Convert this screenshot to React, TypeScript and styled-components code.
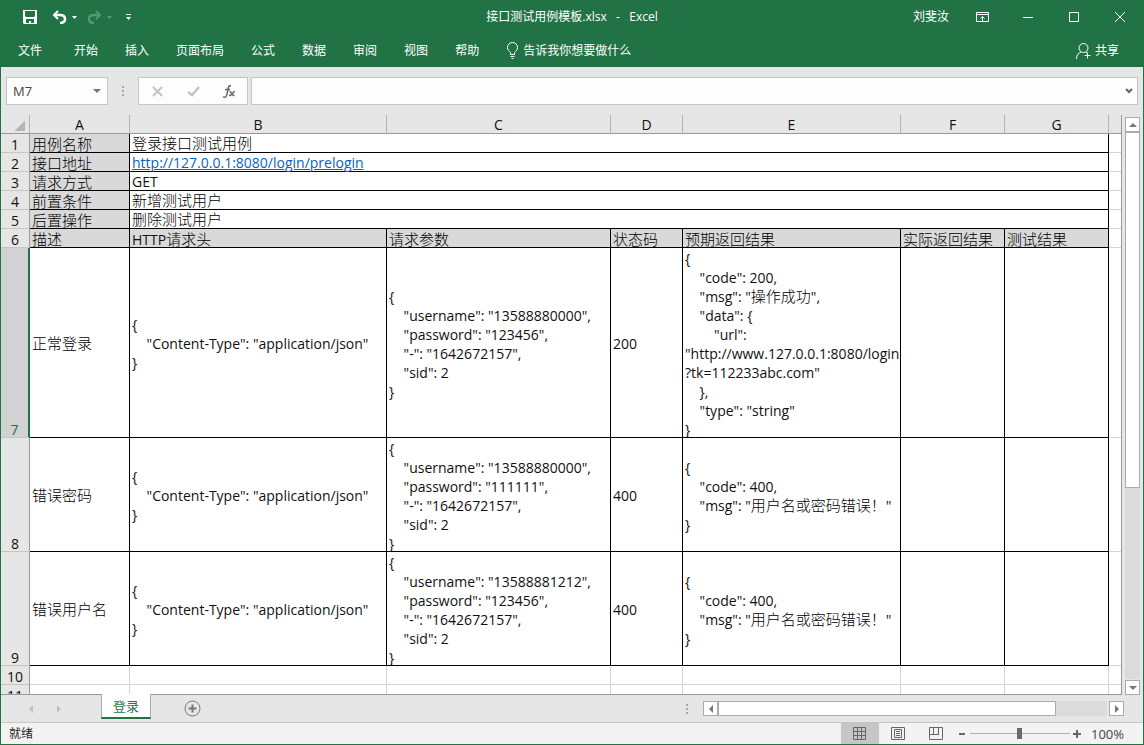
import React from "react";
import styled, { createGlobalStyle } from "styled-components";

const GlobalStyle = createGlobalStyle`
  * { box-sizing: border-box; }
  body { margin: 0; }
  button, input { font: inherit; color: inherit; }
  button { border: 0; padding: 0; background: none; cursor: pointer; }
  svg { display: block; flex: none; }
`;

const GREEN = "#217346";

const Window = styled.div`
  display: flex;
  flex-direction: column;
  height: 100vh;
  border: 1px solid ${GREEN};
  border-top: 0;
  background: #e6e6e6;
  color: #262626;
  font: 12px/16px "Open Sans", "Noto Sans CJK SC", sans-serif;
  overflow: hidden;
`;

const TitleBar = styled.header`
  display: grid;
  grid-template-columns: 1fr auto 1fr;
  align-items: center;
  height: 34px;
  flex: none;
  background: ${GREEN};
  color: #fff;
`;

const QuickTools = styled.div`
  display: flex;
  align-items: center;
  padding-left: 22px;
`;

const ToolButton = styled.button<{ $gap: number; $dim?: boolean }>`
  margin-right: ${(p) => p.$gap}px;
  opacity: ${(p) => (p.$dim ? 0.25 : 1)};
`;

const Title = styled.h1`
  margin: 0;
  font-size: 12px;
  font-weight: 400;
  white-space: pre;
`;

const WindowTools = styled.div`
  display: flex;
  align-items: center;
  justify-content: flex-end;
`;

const UserName = styled.span`
  margin-right: 10px;
`;

const WindowButton = styled.button`
  display: flex;
  align-items: center;
  justify-content: center;
  width: 46px;
  height: 32px;
`;

const Ribbon = styled.nav`
  display: flex;
  align-items: center;
  height: 33px;
  flex: none;
  padding: 0 24px 0 17px;
  gap: 27px;
  background: ${GREEN};
  color: #fff;
`;

const RibbonTab = styled.button<{ $first?: boolean }>`
  display: flex;
  align-items: center;
  gap: 4px;
  height: 32px;
  margin-right: ${(p) => (p.$first ? 5 : 0)}px;
  white-space: nowrap;
`;

const Share = styled(RibbonTab)`
  margin-left: auto;
`;

const FormulaRow = styled.div`
  display: flex;
  align-items: center;
  height: 48px;
  flex: none;
  padding: 0 5px;
`;

const Box = styled.div<{ $width?: number }>`
  display: flex;
  align-items: center;
  height: 28px;
  width: ${(p) => (p.$width ? p.$width + "px" : "auto")};
  flex: ${(p) => (p.$width ? "none" : "1")};
  border: 1px solid #c6c6c6;
  background: #fdfdfd;
`;

const BoxInput = styled.input`
  flex: 1;
  min-width: 0;
  height: 100%;
  padding: 0 6px;
  border: 0;
  outline: 0;
  background: none;
  font-size: 13px;
  color: #444;
`;

const BoxButton = styled.button<{ $width: number }>`
  display: flex;
  align-items: center;
  justify-content: center;
  width: ${(p) => p.$width}px;
  height: 100%;
`;

const Grip = styled.span<{ $width: number }>`
  display: flex;
  justify-content: center;
  width: ${(p) => p.$width}px;
  flex: none;
`;

const Workspace = styled.main`
  display: flex;
  flex: 1;
  min-height: 0;
`;

const Sheet = styled.div`
  flex: 1;
  min-width: 0;
  overflow: hidden;
  border-right: 1px solid #999;
  border-bottom: 1px solid #999;
  background: #fff;
`;

const Grid = styled.table`
  width: 100%;
  table-layout: fixed;
  border-collapse: separate;
  border-spacing: 0;
  color: #111;
  font: 400 14px/19px "Open Sans", "Noto Sans CJK SC", sans-serif;
`;

const ColumnHead = styled.th`
  height: 19px;
  padding: 2px 0 0;
  border-right: 1px solid #b5b5b5;
  border-bottom: 1px solid #999;
  background: #e6e6e6;
  line-height: 16px;
  font-weight: 400;
  &:last-child { border-right: 0; }
`;

const Corner = styled.div`
  width: 11px;
  height: 11px;
  margin: 2px 4px 2px auto;
  background: linear-gradient(135deg, transparent 50%, #b5b5b5 50%);
`;

const RowHead = styled.th<{ $active?: boolean }>`
  padding: 0;
  border-bottom: 1px solid #c6c6c6;
  border-right: ${(p) => (p.$active ? "2px solid " + GREEN : "1px solid #999")};
  background: ${(p) => (p.$active ? "#d2d2d2" : "#e6e6e6")};
  color: ${(p) => (p.$active ? GREEN : "#111")};
  line-height: 15px;
  font-weight: 400;
  vertical-align: bottom;
`;

const Cell = styled.td<{ $shade?: boolean; $faint?: boolean }>`
  padding: 0;
  border-right: 1px solid ${(p) => (p.$faint ? "#d4d4d4" : "#000")};
  border-bottom: 1px solid ${(p) => (p.$faint ? "#d4d4d4" : "#000")};
  background: ${(p) => (p.$shade ? "#d9d9d9" : "#fff")};
  &:last-child { border-right: 0; }
`;

const CellBox = styled.div<{ $height: number; $raised?: boolean }>`
  display: flex;
  align-items: center;
  height: ${(p) => p.$height}px;
  padding: ${(p) => (p.$raised ? 0 : 2)}px 0 0 2px;
  white-space: pre;
`;

const Han = styled.span`
  font-size: 15px;
  font-weight: 300;
  line-height: 16px;
  color: #000;
`;

const CellLink = styled.a`
  color: #0563c1;
`;

const VerticalScroll = styled.div`
  display: flex;
  flex-direction: column;
  width: 21px;
  flex: none;
  padding: 2px 3px 0 3px;
`;

const ScrollButton = styled.button`
  display: flex;
  align-items: center;
  justify-content: center;
  width: 15px;
  height: 15px;
  flex: none;
  border: 1px solid #ababab;
  background: #fff;
`;

const VerticalTrack = styled.div`
  flex: 1;
  margin-bottom: 1px;
  background: #dbdbdb;
`;

const VerticalThumb = styled.div`
  height: 65%;
  border: 1px solid #ababab;
  background: #fff;
`;

const SheetBar = styled.div`
  display: flex;
  align-items: center;
  height: 27px;
  flex: none;
  padding-right: 19px;
`;

const SheetNav = styled.button`
  display: flex;
  justify-content: center;
  width: 28px;
`;

const SheetTab = styled.button`
  align-self: flex-start;
  width: 50px;
  height: 25px;
  margin: -1px 33px 0 28px;
  border-left: 1px solid #ababab;
  border-right: 1px solid #ababab;
  border-bottom: 2px solid ${GREEN};
  background: #fff;
  color: ${GREEN};
  font-size: 13px;
`;

const HorizontalScroll = styled.div`
  display: flex;
  width: 421px;
  height: 15px;
`;

const HorizontalTrack = styled.div`
  flex: 1;
  margin-right: 2px;
  background: #dbdbdb;
`;

const HorizontalThumb = styled.div`
  width: 87%;
  height: 15px;
  border: 1px solid #ababab;
  background: #fff;
`;

const Spacer = styled.div`
  flex: 1;
`;

const StatusBar = styled.footer`
  display: flex;
  align-items: center;
  height: 22px;
  flex: none;
  padding: 0 19px 0 8px;
  border-top: 1px solid #c6c6c6;
  background: #f3f3f3;
`;

const ViewButton = styled.button<{ $active?: boolean }>`
  display: flex;
  align-items: center;
  justify-content: center;
  width: 38px;
  height: 100%;
  background: ${(p) => (p.$active ? "#c6c6c6" : "none")};
`;

const ZoomButton = styled.button`
  display: flex;
  align-items: center;
  justify-content: center;
  width: 15px;
  height: 16px;
`;

const ZoomSlider = styled.input`
  appearance: none;
  width: 100px;
  height: 16px;
  margin: 0;
  background: linear-gradient(#b0b0b0, #b0b0b0) center / 100% 1px no-repeat;
  &::-webkit-slider-thumb {
    appearance: none;
    width: 5px;
    height: 11px;
    background: #6a6a6a;
  }
`;

const ZoomValue = styled.output`
  margin-left: 6px;
  font-size: 13px;
  color: #444;
`;

const Caret = ({ dir, fill = "#777" }: { dir: "up" | "down" | "left" | "right"; fill?: string }) => {
  const shapes = {
    up: "M0 6 4 2l4 4z",
    down: "M0 2h8L4 6z",
    left: "M6 0v8L2 4z",
    right: "M2 0v8l4-4z",
  };
  return (
    <svg width="8" height="8" viewBox="0 0 8 8" aria-hidden>
      <path d={shapes[dir]} fill={fill} />
    </svg>
  );
};

const Dots = () => (
  <svg width="2" height="10" viewBox="0 0 2 10" fill="#a8a8a8" aria-hidden>
    <path d="M0 0h2v2H0zM0 4h2v2H0zM0 8h2v2H0z" />
  </svg>
);

const SaveIcon = () => (
  <svg width="15" height="14" viewBox="0 0 15 14" aria-hidden>
    <path fill="#fff" fillRule="evenodd" d="M0 0h14v14H1l-1-1zM2 1v5l1 1h8l1-1V1zM3 9v4h3v-2h2v2h3V9z" />
  </svg>
);

const UndoIcon = () => (
  <svg width="15" height="14" viewBox="0 0 15 14" fill="none" stroke="#fff" strokeWidth="2" aria-hidden>
    <path d="M6 1 2 5l4 4" />
    <path strokeWidth="2.500" d="M2 5h6c3 0 5 1 5 4s-2 4-5 4" />
  </svg>
);

const RedoIcon = () => (
  <svg width="15" height="14" viewBox="0 0 15 14" fill="none" stroke="#fff" strokeWidth="2" aria-hidden>
    <path d="m9 1 4 4-4 4" />
    <path strokeWidth="2.500" d="M13 5H7c-3 0-5 1-5 4s2 4 5 4" />
  </svg>
);

const SmallCaret = () => (
  <svg width="5" height="3" viewBox="0 0 5 3" aria-hidden>
    <path d="M0 0h5L2.500 3z" fill="#fff" />
  </svg>
);

const CellText = ({ height, text = "", raised }: { height: number; text?: string; raised?: boolean }) => (
  <CellBox $height={height} $raised={raised}>
    <div>
      {text.startsWith("http") ? (
        <CellLink href={text}>{text}</CellLink>
      ) : (
        text.split(/([\u3000-\u9fff\uff00-\uffef]+)/).map((run, i) => (i % 2 ? <Han key={i}>{run}</Han> : run))
      )}
    </div>
  </CellBox>
);

const tabs = ["文件", "开始", "插入", "页面布局", "公式", "数据", "审阅", "视图", "帮助"];
const columns = [
  ["A", 100],
  ["B", 257],
  ["C", 224],
  ["D", 72],
  ["E", 218],
  ["F", 104],
  ["G", 104],
] as const;

const info = [
  ["用例名称", "登录接口测试用例"],
  ["接口地址", "http://127.0.0.1:8080/login/prelogin"],
  ["请求方式", "GET"],
  ["前置条件", "新增测试用户"],
  ["后置操作", "删除测试用户"],
];

const heads = ["描述", "HTTP请求头", "请求参数", "状态码", "预期返回结果", "实际返回结果", "测试结果"];

const requestHead = `{
    "Content-Type": "application/json"
}`;

const params = (user: string, password: string) => `{
    "username": "${user}",
    "password": "${password}",
    "-": "1642672157",
    "sid": 2
}`;

const failure = `{
    "code": 400,
    "msg": "用户名或密码错误！"
}`;

const success = `{
    "code": 200,
    "msg": "操作成功",
    "data": {
        "url":
"http://www.127.0.0.1:8080/login
?tk=112233abc.com"
    },
    "type": "string"
}`;

const cases = [
  { row: 7, height: 189, cells: ["正常登录", requestHead, params("13588880000", "123456"), "200", success, "", ""] },
  { row: 8, height: 113, cells: ["错误密码", requestHead, params("13588880000", "111111"), "400", failure, "", ""] },
  { row: 9, height: 113, cells: ["错误用户名", requestHead, params("13588881212", "123456"), "400", failure, "", ""] },
];

export default function App() {
  return (
    <Window>
      <GlobalStyle />
      <TitleBar>
        <QuickTools>
          <ToolButton $gap={14} aria-label="保存"><SaveIcon /></ToolButton>
          <ToolButton $gap={5} aria-label="撤消"><UndoIcon /></ToolButton>
          <ToolButton $gap={10} aria-label="撤消列表"><SmallCaret /></ToolButton>
          <ToolButton $gap={5} $dim aria-label="恢复"><RedoIcon /></ToolButton>
          <ToolButton $gap={14} $dim aria-label="恢复列表"><SmallCaret /></ToolButton>
          <ToolButton $gap={0} aria-label="自定义快速访问工具栏">
            <svg width="5" height="6" viewBox="0 0 5 6" fill="#fff" aria-hidden>
              <path d="M0 0h5v1H0zM0 3h5L2.500 6z" />
            </svg>
          </ToolButton>
        </QuickTools>
        <Title>接口测试用例模板.xlsx   -   Excel</Title>
        <WindowTools>
          <UserName>刘斐汝</UserName>
          <WindowButton aria-label="功能区显示选项">
            <svg width="13" height="10" viewBox="0 0 13 10" fill="none" stroke="#fff" aria-hidden>
              <path d="M.5.5h12v9H.5zM.5 2.500h12M6.500 9V4.500M4.500 6.500l2-2 2 2" />
            </svg>
          </WindowButton>
          <WindowButton aria-label="最小化">
            <svg width="10" height="10" viewBox="0 0 10 10" aria-hidden><path d="M0 5h10v1H0z" fill="#fff" /></svg>
          </WindowButton>
          <WindowButton aria-label="最大化">
            <svg width="10" height="10" viewBox="0 0 10 10" fill="none" stroke="#fff" aria-hidden><path d="M.5.5h9v9h-9z" /></svg>
          </WindowButton>
          <WindowButton aria-label="关闭">
            <svg width="10" height="10" viewBox="0 0 10 10" fill="none" stroke="#fff" aria-hidden><path d="m0 0 10 10M10 0 0 10" /></svg>
          </WindowButton>
        </WindowTools>
      </TitleBar>
      <Ribbon>
        {tabs.map((t, i) => (
          <RibbonTab key={t} $first={i === 0}>{t}</RibbonTab>
        ))}
        <RibbonTab>
          <svg width="13" height="17" viewBox="0 0 13 17" fill="none" stroke="#fff" aria-hidden>
            <path d="M4.500 12.500v-2C3 9 1.500 8 1.500 5.500a5 5 0 0 1 10 0c0 2.500-1.500 3.500-3 5v2zM4.500 14.500h4M5.500 16.500h2" />
          </svg>
          告诉我你想要做什么
        </RibbonTab>
        <Share>
          <svg width="15" height="16" viewBox="0 0 15 16" fill="none" stroke="#fff" aria-hidden>
            <circle cx="7.500" cy="5" r="4.500" />
            <path d="M.5 16c0-4 2-6 4.500-7M10 9l1 1M11.500 9.500v6M8.500 12.500h6" />
          </svg>
          共享
        </Share>
      </Ribbon>
      <FormulaRow>
        <Box $width={102}>
          <BoxInput aria-label="名称框" defaultValue="M7" />
          <BoxButton $width={20} aria-label="名称列表"><Caret dir="down" /></BoxButton>
        </Box>
        <Grip $width={30}><Dots /></Grip>
        <Box $width={110}>
          <BoxButton $width={36} aria-label="取消">
            <svg width="11" height="11" viewBox="0 0 11 11" fill="none" stroke="#c3c3c3" strokeWidth="2" aria-hidden><path d="m1 1 9 9M10 1l-9 9" /></svg>
          </BoxButton>
          <BoxButton $width={36} aria-label="输入">
            <svg width="13" height="11" viewBox="0 0 13 11" fill="none" stroke="#c3c3c3" strokeWidth="2.500" aria-hidden><path d="m1 6 4 3 7-8" /></svg>
          </BoxButton>
          <BoxButton $width={36} aria-label="插入函数">
            <svg width="13" height="13" viewBox="0 0 13 13" fill="none" stroke="#666" strokeWidth="1.500" aria-hidden>
              <path d="M8 1C6 0 5.500 1.500 5 4L4 9c-.5 3-1.500 3.500-4 3M2 4.500h5M6.500 6.500c2-.5 2 4.500 5 4M12 6.500c-2-.5-3 4.500-6 4" />
            </svg>
          </BoxButton>
        </Box>
        <Grip $width={3} />
        <Box>
          <BoxInput aria-label="编辑栏" />
          <BoxButton $width={16} aria-label="展开编辑栏">
            <svg width="8" height="6" viewBox="0 0 8 6" fill="none" stroke="#666" strokeWidth="2" aria-hidden><path d="m1 1 3 3 3-3" /></svg>
          </BoxButton>
        </Box>
      </FormulaRow>
      <Workspace>
        <Sheet>
          <Grid>
            <colgroup>
              <col width="29" />
              {columns.map(([name, width]) => <col key={name} width={width} />)}
              <col />
            </colgroup>
            <thead>
              <tr>
                <ColumnHead aria-label="全选"><Corner /></ColumnHead>
                {columns.map(([name]) => <ColumnHead key={name} scope="col">{name}</ColumnHead>)}
                <ColumnHead aria-label="H" />
              </tr>
            </thead>
            <tbody>
              {info.map(([label, value], i) => (
                <tr key={label}>
                  <RowHead scope="row">{i + 1}</RowHead>
                  <Cell $shade><CellText height={18} text={label} /></Cell>
                  <Cell colSpan={6}><CellText height={18} text={value} raised /></Cell>
                  <Cell $faint />
                </tr>
              ))}
              <tr>
                <RowHead scope="row">6</RowHead>
                {heads.map((h) => <Cell key={h} $shade><CellText height={18} text={h} /></Cell>)}
                <Cell $faint />
              </tr>
              {cases.map((c) => (
                <tr key={c.row}>
                  <RowHead scope="row" $active={c.row === 7}>{c.row}</RowHead>
                  {c.cells.map((text, i) => <Cell key={i}><CellText height={c.height} text={text} /></Cell>)}
                  <Cell $faint />
                </tr>
              ))}
              {[10, 11].map((n) => (
                <tr key={n}>
                  <RowHead scope="row">{n}</RowHead>
                  {columns.map(([name]) => <Cell key={name} $faint><CellText height={18} /></Cell>)}
                  <Cell $faint />
                </tr>
              ))}
            </tbody>
          </Grid>
        </Sheet>
        <VerticalScroll>
          <ScrollButton aria-label="向上滚动"><Caret dir="up" /></ScrollButton>
          <VerticalTrack><VerticalThumb /></VerticalTrack>
          <ScrollButton aria-label="向下滚动"><Caret dir="down" /></ScrollButton>
        </VerticalScroll>
      </Workspace>
      <SheetBar>
        <Grip $width={16} />
        <SheetNav aria-label="上一张工作表"><Caret dir="left" fill="#c0c0c0" /></SheetNav>
        <SheetNav aria-label="下一张工作表"><Caret dir="right" fill="#c0c0c0" /></SheetNav>
        <SheetTab>登录</SheetTab>
        <button aria-label="新工作表">
          <svg width="17" height="17" viewBox="0 0 17 17" fill="none" stroke="#777" aria-hidden>
            <circle cx="8.500" cy="8.500" r="7.500" />
            <path d="M8.500 4.500v8M4.500 8.500h8" strokeWidth="2" />
          </svg>
        </button>
        <Spacer />
        <Grip $width={32}><Dots /></Grip>
        <HorizontalScroll>
          <ScrollButton aria-label="向左滚动"><Caret dir="left" /></ScrollButton>
          <HorizontalTrack><HorizontalThumb /></HorizontalTrack>
          <ScrollButton aria-label="向右滚动"><Caret dir="right" /></ScrollButton>
        </HorizontalScroll>
      </SheetBar>
      <StatusBar>
        <span>就绪</span>
        <Spacer />
        <ViewButton $active aria-label="普通">
          <svg width="13" height="13" viewBox="0 0 13 13" fill="none" stroke="#666" aria-hidden><path d="M.5.5h12v12H.5zM4.500 0v13M8.500 0v13M0 4.500h13M0 8.500h13" /></svg>
        </ViewButton>
        <ViewButton aria-label="页面布局">
          <svg width="14" height="13" viewBox="0 0 14 13" fill="none" stroke="#666" aria-hidden><path d="M.5.5h13v12H.5zM3.500 2.500h7v8h-7zM5 4.500h4M5 6.500h4M5 8.500h4" /></svg>
        </ViewButton>
        <ViewButton aria-label="分页预览">
          <svg width="14" height="13" viewBox="0 0 14 13" fill="none" stroke="#666" aria-hidden><path d="M.5.5h13v12H.5zM4.500 0v7.500M9.500 0v7.500M0 7.500h10" /></svg>
        </ViewButton>
        <ZoomButton aria-label="缩小"><svg width="6" height="2" aria-hidden><path d="M0 0h6v2H0z" fill="#666" /></svg></ZoomButton>
        <ZoomSlider type="range" aria-label="缩放" min="0" max="200" defaultValue="100" />
        <ZoomButton aria-label="放大"><svg width="8" height="8" aria-hidden><path d="M3 0h2v3h3v2H5v3H3V5H0V3h3z" fill="#666" /></svg></ZoomButton>
        <ZoomValue>100%</ZoomValue>
      </StatusBar>
    </Window>
  );
}
